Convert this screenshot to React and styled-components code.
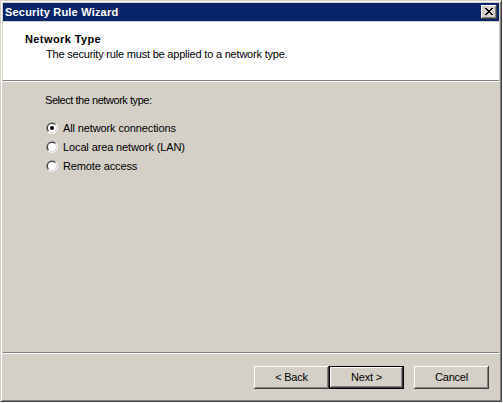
import React from "react";
import styled, { createGlobalStyle } from "styled-components";

const Global = createGlobalStyle`
  html, body { margin: 0; padding: 0; background: #ffffff; }
  body {
    font-family: "Liberation Sans", Arial, sans-serif;
    font-size: 11px;
    color: #000;
  }
`;

const Window = styled.div`
  width: 502px;
  height: 402px;
  box-sizing: border-box;
  background: #d4d0c8;
  border: 1px solid;
  border-color: #d4d0c8 #404040 #404040 #d4d0c8;
  box-shadow: inset 1px 1px #ffffff, inset -1px -1px #808080;
  padding: 2px;
  display: flex;
  flex-direction: column;
`;

const TitleBar = styled.div`
  height: 18px;
  flex: 0 0 18px;
  background: #0a246a;
  display: flex;
  align-items: center;
  justify-content: space-between;
  padding: 0 2px 0 2px;
  margin-bottom: 1px;
`;

const TitleText = styled.span`
  color: #ffffff;
  font-weight: bold;
  font-size: 11px;
  letter-spacing: 0.2px;
  line-height: 13px;
`;

const CloseButton = styled.div`
  width: 16px;
  height: 14px;
  box-sizing: border-box;
  background: #d4d0c8;
  box-shadow: inset -1px -1px #404040, inset 1px 1px #ffffff,
    inset -2px -2px #808080, inset 2px 2px #d4d0c8;
  display: flex;
  align-items: center;
  justify-content: center;
  padding: 0 1px 1px 0;
`;

const Client = styled.div`
  flex: 1;
  display: flex;
  flex-direction: column;
`;

const Header = styled.div`
  height: 58px;
  flex: 0 0 58px;
  box-sizing: border-box;
  background: #ffffff;
  padding: 11px 0 0 22px;
`;

const HeaderTitle = styled.div`
  font-weight: bold;
  line-height: 13px;
  letter-spacing: 0.4px;
`;

const HeaderSub = styled.div`
  line-height: 14px;
  padding-left: 21px;
  margin-top: 1px;
  letter-spacing: -0.2px;
`;

const Separator = styled.div`
  height: 0;
  border-top: 1px solid #808080;
  border-bottom: 1px solid #ffffff;
`;

const Body = styled.div`
  flex: 1;
  padding: 12px 0 0 42px;
  display: flex;
  flex-direction: column;
`;

const Prompt = styled.div`
  line-height: 13px;
  letter-spacing: -0.45px;
  margin-bottom: 11px;
`;

const RadioRow = styled.label`
  display: flex;
  align-items: center;
  height: 19.3px;
  padding-left: 1px;
  gap: 5px;
  letter-spacing: -0.12px;
`;

const Footer = styled.div`
  flex: 0 0 45px;
  box-sizing: border-box;
  display: flex;
  justify-content: flex-end;
  align-items: flex-start;
  padding: 12px 10px 0 0;
`;

const Button = styled.div`
  width: 75px;
  height: 23px;
  box-sizing: border-box;
  background: #d4d0c8;
  display: flex;
  align-items: center;
  justify-content: center;
  margin-left: ${(p) => p.$gap || 0}px;
  border: ${(p) => (p.$default ? "1px solid #000" : "none")};
  box-shadow: inset -1px -1px #404040, inset 1px 1px #ffffff,
    inset -2px -2px #808080, inset 2px 2px #d4d0c8;
  letter-spacing: -0.2px;
  padding-bottom: 1px;
`;

const RadioIcon = ({ checked }) => (
  <svg width="12" height="12" viewBox="0 0 12 12">
    <path d="M1.76 10.24 A6 6 0 0 1 10.24 1.76 Z" fill="#808080" />
    <path d="M1.76 10.24 A6 6 0 0 0 10.24 1.76 Z" fill="#ffffff" />
    <path d="M2.46 9.54 A5 5 0 0 1 9.54 2.46 Z" fill="#404040" />
    <path d="M2.46 9.54 A5 5 0 0 0 9.54 2.46 Z" fill="#d4d0c8" />
    <circle cx="6" cy="6" r="4" fill="#ffffff" />
    {checked && <circle cx="6" cy="6" r="2" fill="#000000" />}
  </svg>
);

const CloseGlyph = () => (
  <svg width="8" height="7" viewBox="0 0 8 7" shapeRendering="crispEdges">
    <rect x="0" y="0" width="2" height="1" />
    <rect x="6" y="0" width="2" height="1" />
    <rect x="1" y="1" width="2" height="1" />
    <rect x="5" y="1" width="2" height="1" />
    <rect x="2" y="2" width="4" height="1" />
    <rect x="3" y="3" width="2" height="1" />
    <rect x="2" y="4" width="4" height="1" />
    <rect x="1" y="5" width="2" height="1" />
    <rect x="5" y="5" width="2" height="1" />
    <rect x="0" y="6" width="2" height="1" />
    <rect x="6" y="6" width="2" height="1" />
  </svg>
);

const options = [
  { label: "All network connections", checked: true },
  { label: "Local area network (LAN)", checked: false },
  { label: "Remote access", checked: false },
];

export default function App() {
  return (
    <>
      <Global />
      <Window>
        <TitleBar>
          <TitleText>Security Rule Wizard</TitleText>
          <CloseButton>
            <CloseGlyph />
          </CloseButton>
        </TitleBar>
        <Client>
          <Header>
            <HeaderTitle>Network Type</HeaderTitle>
            <HeaderSub>The security rule must be applied to a network type.</HeaderSub>
          </Header>
          <Separator />
          <Body>
            <Prompt>Select the network type:</Prompt>
            {options.map((o) => (
              <RadioRow key={o.label}>
                <RadioIcon checked={o.checked} />
                <span>{o.label}</span>
              </RadioRow>
            ))}
          </Body>
          <Separator />
          <Footer>
            <Button>&lt; Back</Button>
            <Button $default>Next &gt;</Button>
            <Button $gap={10}>Cancel</Button>
          </Footer>
        </Client>
      </Window>
    </>
  );
}
